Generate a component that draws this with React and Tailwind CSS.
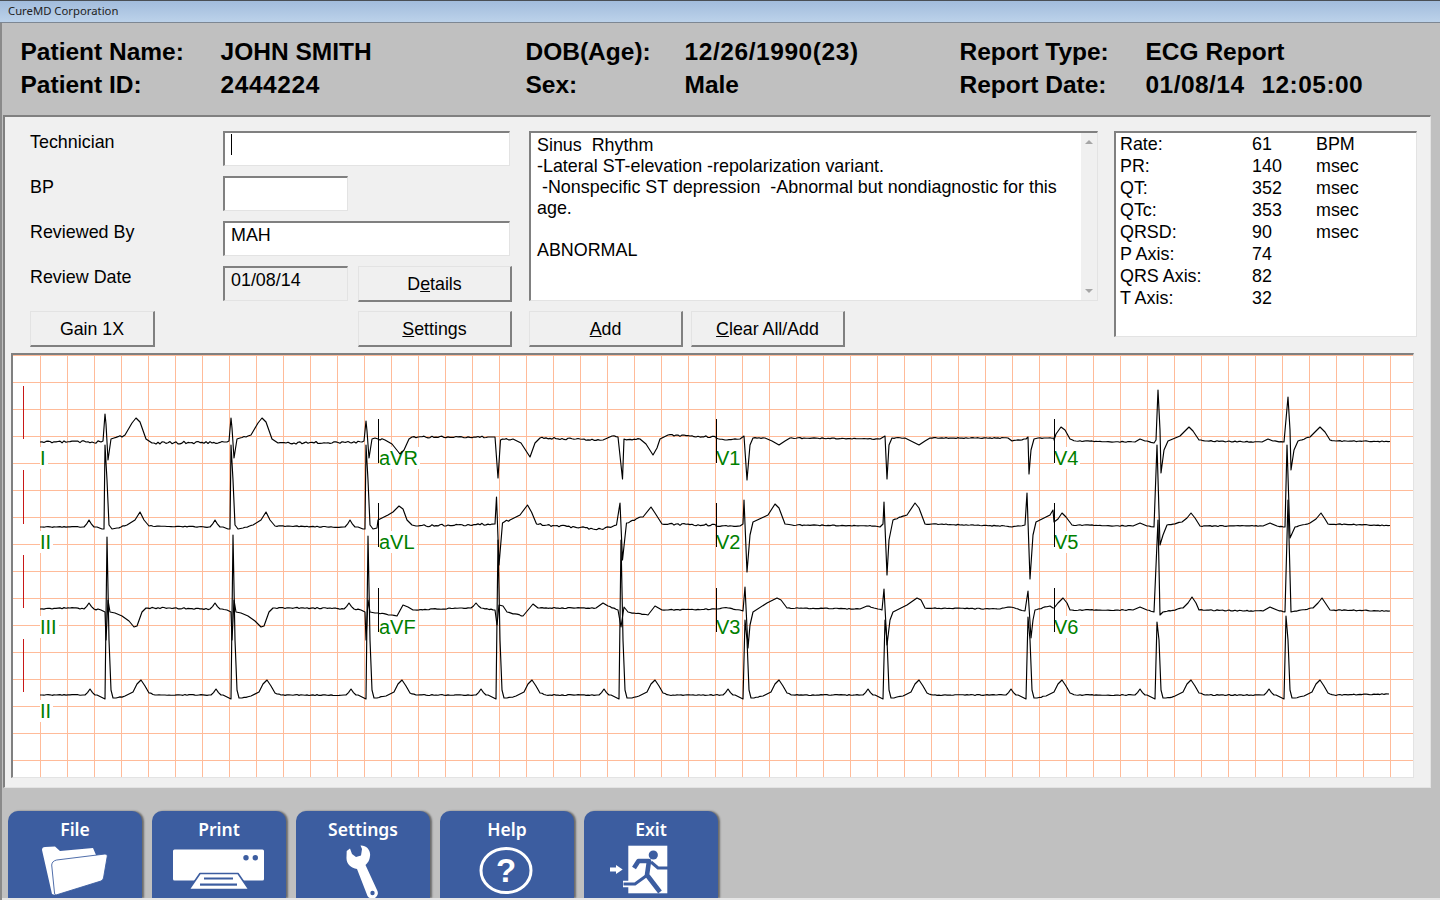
const BODY_FONT = "font-['Liberation_Sans',Arial,sans-serif]";

// deterministic jitter so the baselines look like a real recording
function jitter(x) {
  const n = Math.sin(x * 12.9898) * 43758.5453;
  return (n - Math.floor(n) - 0.5) * 2;
}

function noisy(points, amp) {
  const out = [];
  points.forEach(([x, y], i) => {
    out.push([x, y]);
    const next = points[i + 1];
    if (!next) return;
    const dx = next[0] - x;
    const dy = next[1] - y;
    if (dx < 6 || Math.abs(dy / dx) > 0.4) return;
    for (let px = x + 2; px < next[0] - 1; px += 2) {
      out.push([px, y + (dy * (px - x)) / dx + jitter(px) * amp]);
    }
  });
  return out;
}

const hump = (c, base, peak, w = 5) => [
  [c - w, base],
  [c - w * 0.5, base * 0.6 + peak * 0.4],
  [c, peak],
  [c + w * 0.5, base * 0.6 + peak * 0.4],
  [c + w, base],
];

const leadI = (r, top, sb) => [
  [r - 4, 442], [r - 2, 441], [r, top], [r + 1, top + 10], [r + 3, sb], [r + 6, 439], [r + 9, 438],
  [r + 20, 435], [r + 27, 423], [r + 31, 418], [r + 35, 422], [r + 41, 439], [r + 47, 443],
];

const leadII = (r) => [
  [r - 22, 527], ...hump(r - 16, 527, 520), [r - 8, 527], [r - 3, 529], [r - 1, 529], [r, 445], [r + 2, 480],
  [r + 4, 525], [r + 7, 529], [r + 12, 528], [r + 22, 525], [r + 30, 520], [r + 35, 512], [r + 39, 520], [r + 44, 526],
];

const leadIII = (r, tx) => [
  ...hump(r - 17, 609, 603), [r - 5, 610], [r - 1, 612], [r, 640], [r + 2, 600], [r + 4, 612], [r + 9, 613],
  [r + 16, 616], [r + 23, 621], [tx, 627], [tx + 3, 626], [tx + 8, 612], [tx + 12, 608],
];

const rhythm = (r, top) => [
  [r - 24, 695], ...hump(r - 17, 695, 689), [r - 10, 695], [r - 4, 698], [r - 2, 699], [r, top], [r + 2, 640],
  [r + 4, 690], [r + 6, 698], [r + 9, 698], [r + 18, 696], [r + 26, 692], [r + 30, 684], [r + 34, 680],
  [r + 38, 686], [r + 42, 693], [r + 48, 695],
];

const before = (pts, x) => pts.filter((p) => p[0] < x);

const row1 = [
  ...noisy([[40, 442], ...leadI(105, 414, 460), ...leadI(231, 418, 458), ...before(leadI(366, 421, 458), 378)], 1.3),
  ...noisy([
    [378, 439], [385, 440], [392, 444], [400, 454], [404, 450], [409, 439], [412, 437], [490, 437], [495, 437],
    [498, 478], [500.5, 440], [513, 439], [521, 443], [530, 457], [535, 443], [540, 438], [603, 440], [612, 436],
    [618, 437], [622.5, 479], [624, 439], [640, 439], [646, 444], [653, 455], [657, 448], [660, 439], [668, 435], [716, 437],
  ], 0.9),
  ...noisy([
    [716, 438], [725, 440], [740, 439], [744, 436], [747, 480], [750, 445], [753, 438], [765, 438], [772, 441],
    [779, 445], [785, 441], [790, 438], [880, 439], [885, 436], [887, 479], [889, 445], [892, 438], [905, 438],
    [913, 442], [919, 445], [925, 441], [930, 438], [1008, 438], [1012, 441], [1026, 439], [1028, 437], [1029, 474],
    [1031, 450], [1034, 439], [1038, 438], [1054, 438],
  ], 0.5),
  ...noisy([
    [1054, 440], [1056, 434], [1061, 427], [1065, 430], [1070, 439], [1076, 441], [1135, 442], [1140, 439], [1145, 441],
    [1154, 443], [1156, 440], [1158, 390], [1160, 430], [1161, 473], [1164, 450], [1168, 441], [1180, 436], [1185, 431],
    [1189, 427], [1193, 431], [1199, 440], [1205, 441], [1262, 442], [1268, 439], [1273, 441], [1284, 442], [1288, 397],
    [1290, 430], [1291, 470], [1294, 450], [1298, 441], [1310, 437], [1316, 431], [1320, 427], [1325, 432], [1330, 440],
    [1336, 441], [1390, 441.5],
  ], 0.5),
];

const row2 = [
  ...noisy([[40, 527], ...leadII(105), ...leadII(231), ...before(leadII(366), 378), [377, 528]], 0.5),
  ...noisy([
    [378, 520], [388, 515], [393, 512], [399, 506], [403, 509], [407, 520], [412, 525], [416, 526], [495, 524], [496.5, 497],
    [499, 565], [502.5, 523], [510, 520], [520, 515], [527.5, 505], [531.5, 512], [536.5, 524], [547, 525], [601, 529],
    [616.5, 525], [620, 503], [622.5, 560], [626.5, 523], [643, 517], [651, 507], [655, 513], [662, 524], [716, 525],
  ], 1.1),
  ...noisy([
    [716, 526], [740, 526], [743, 524], [744, 500], [747, 572], [750, 535], [753, 522], [768, 515], [775, 504], [779, 508],
    [785, 524], [792, 525], [875, 526], [880, 527], [883, 524], [884, 502], [887, 575], [889, 540], [893, 520], [907, 515],
    [915, 503], [919, 508], [925, 524], [932, 524], [1005, 526], [1012, 527], [1025, 525], [1027, 493], [1030, 579],
    [1033, 535], [1036, 522], [1050, 515], [1053, 510],
  ], 0.5),
  ...noisy([
    [1054, 522], [1058, 519], [1062, 513], [1066, 517], [1072, 525], [1078, 525], [1133, 526], [1140, 523], [1147, 526],
    [1154, 527], [1157, 445], [1160, 545], [1163, 535], [1167, 525], [1182, 522], [1187, 518], [1191, 513], [1195, 518],
    [1200, 526], [1263, 526], [1270, 523], [1277, 526], [1285, 527], [1287, 445], [1290, 538], [1295, 527], [1310, 523],
    [1316, 519], [1321, 513], [1325, 519], [1328, 524], [1390, 525.5],
  ], 0.5),
];

const row3 = [
  ...noisy([[40, 609], [70, 608], ...leadIII(106, 134), [170, 608], ...leadIII(232, 261), [330, 608], ...before(leadIII(366, 396), 378)], 0.7),
  ...noisy([
    [378, 613], [390, 615], [397, 616], [403, 605], [408, 607], [413, 610], [460, 608], ...hump(476, 608, 603),
    [495, 610], [497, 625], [499, 605], [503, 606], [507, 612], [523, 616], [528, 610], [533, 604], [538, 608], [596, 608],
    [603, 603], [608, 606], [618, 610], [621, 627], [624, 607], [628, 612], [648, 615], [655, 606], [662, 610], [716, 609],
  ], 0.5),
  ...noisy([
    [716, 609], [722, 608], [728, 608], [740, 610], [743, 611], [745, 587], [748, 648], [750, 625], [753, 612], [767, 603],
    [777, 598], [781, 600], [787, 608], [860, 609], [867, 606], [874, 608], [882, 610], [884, 589], [887, 645], [890, 620],
    [893, 612], [907, 605], [917, 598], [921, 600], [925, 608], [1000, 609], [1010, 607], [1025, 611], [1028, 591],
    [1031, 638], [1033, 620], [1035, 610], [1050, 606], [1053, 608],
  ], 0.5),
  ...noisy([
    [1054, 608], [1058, 603], [1063, 598], [1067, 603], [1070, 610], [1133, 610], [1140, 607], [1147, 610], [1154, 612],
    [1158, 520], [1160, 615], [1163, 612], [1183, 608], [1188, 603], [1192, 597], [1196, 603], [1199, 610], [1263, 611],
    [1270, 607], [1277, 610], [1285, 612], [1288, 500], [1291, 612], [1313, 608], [1318, 603], [1322, 598], [1326, 604],
    [1330, 610], [1390, 611],
  ], 0.5),
];

const row4 = noisy(
  [
    [40, 695],
    ...[[107, 537], [233, 535], [368, 536], [498, 540], [621, 540], [745, 620], [885, 620], [1028, 617], [1157, 622], [1286, 616]].flatMap(
      ([r, top]) => rhythm(r, top)
    ),
    [1389, 694],
  ],
  0.5
);

const traces = [row1, row2, row3, row4];
const markers = [378, 716, 1054];
const calibration = [[386, 439], [470, 524], [555, 608], [639, 692]];

const labels = [
  { text: "I", cls: "left-[27px] top-[92px]" },
  { text: "II", cls: "left-[27px] top-[176px]" },
  { text: "III", cls: "left-[27px] top-[261px]" },
  { text: "II", cls: "left-[27px] top-[345px]" },
  { text: "aVR", cls: "left-[366px] top-[92px]" },
  { text: "aVL", cls: "left-[366px] top-[176px]" },
  { text: "aVF", cls: "left-[366px] top-[261px]" },
  { text: "V1", cls: "left-[703px] top-[92px]" },
  { text: "V2", cls: "left-[703px] top-[176px]" },
  { text: "V3", cls: "left-[703px] top-[261px]" },
  { text: "V4", cls: "left-[1041px] top-[92px]" },
  { text: "V5", cls: "left-[1041px] top-[176px]" },
  { text: "V6", cls: "left-[1041px] top-[261px]" },
];

const measures = [
  ["Rate:", "61", "BPM"],
  ["PR:", "140", "msec"],
  ["QT:", "352", "msec"],
  ["QTc:", "353", "msec"],
  ["QRSD:", "90", "msec"],
  ["P Axis:", "74", ""],
  ["QRS Axis:", "82", ""],
  ["T Axis:", "32", ""],
];

function Field({ children, className = "" }) {
  return (
    <div className={`h-[35px] border-t-2 border-l-2 border-r border-b border-t-[#808080] border-l-[#808080] border-r-[#e3e3e3] border-b-[#e3e3e3] pl-[6px] leading-[24px] ${className}`}>
      {children}
    </div>
  );
}

function Btn({ children, className = "" }) {
  return (
    <button className={`h-[36px] bg-[#f0f0f0] border-t border-l border-r-2 border-b-2 border-t-[#e3e3e3] border-l-[#e3e3e3] border-r-[#808080] border-b-[#808080] text-[17.8px] text-black leading-[32px] ${className}`}>
      {children}
    </button>
  );
}

function FolderIcon() {
  return (
    <>
      <path d="M34 10 Q34 7 37 7 L47 6.5 L52 11 L85 8 L88 15 L55 40 L47 55 L44 54 Z" fill="#fff" />
      <path d="M43.7 25 Q44 21 48.7 20 L97 14 Q99.5 14 99.3 16 L95.5 38 Q95 40 93 41 L48 55 Q46.5 55 46.5 53 Z" fill="#fff" stroke="#3c5da0" strokeWidth="0.9" />
    </>
  );
}

function PrinterIcon() {
  return (
    <>
      <rect x="21" y="9.5" width="91" height="31" rx="1.5" fill="#fff" />
      <circle cx="94" cy="17.7" r="2.7" fill="#3c5da0" />
      <circle cx="103.3" cy="17.7" r="2.7" fill="#3c5da0" />
      <path d="M48 33.5 L86 33.5 L97 49.5 L37 49.5 Z" fill="#fff" stroke="#3c5da0" strokeWidth="1.6" strokeLinejoin="round" />
      <rect x="52" y="37.5" width="29" height="2" fill="#3c5da0" />
      <rect x="48" y="43.5" width="37" height="2.2" fill="#3c5da0" />
    </>
  );
}

function WrenchIcon() {
  return (
    <>
      <path d="M50.7 11 L54 8.5 L56 14 L60 17 L65 15.5 L66 9 L64.5 5.5 C70 5 75 10 74 16 C73.5 21 71.5 23 69.5 25 L81 50 A5.6 5.6 0 0 1 71.5 56 L61 29 C55 28 50 24 50.5 17 Z" fill="#fff" />
      <circle cx="76.5" cy="53" r="2.2" fill="#3c5da0" />
    </>
  );
}

function HelpIcon() {
  return (
    <>
      <ellipse cx="66" cy="30.5" rx="25" ry="22" fill="none" stroke="#fff" strokeWidth="3" />
      <text x="66" y="42" textAnchor="middle" fill="#fff" fontSize="33" fontWeight="700" fontFamily="Liberation Sans, Arial, sans-serif">?</text>
    </>
  );
}

function ExitIcon() {
  return (
    <>
      <rect x="44.3" y="5.7" width="39" height="47.6" fill="#fff" />
      <path d="M26 27.5 H32 V25 L38.7 29.5 L32 34 V31.5 H26 Z" fill="#fff" />
      <circle cx="69.3" cy="15" r="4.6" fill="#3c5da0" />
      <path d="M39 44 H51 L62 37" fill="none" stroke="#fff" strokeWidth="6.5" />
      <path d="M39.5 44 H51 L62 36" fill="none" stroke="#3c5da0" strokeWidth="3" />
      <path d="M50 28 L54.5 21 H65 L63 35 L76 52" fill="none" stroke="#3c5da0" strokeWidth="4.6" strokeLinejoin="round" />
      <path d="M67 22 L74 28 H84" fill="none" stroke="#3c5da0" strokeWidth="3" />
    </>
  );
}

const dock = [
  { name: "File", Icon: FolderIcon },
  { name: "Print", Icon: PrinterIcon },
  { name: "Settings", Icon: WrenchIcon },
  { name: "Help", Icon: HelpIcon },
  { name: "Exit", Icon: ExitIcon },
];

export default function App() {
  return (
    <div className={`w-[1440px] h-[900px] overflow-hidden bg-[#c0c0c0] flex flex-col text-black ${BODY_FONT}`}>
      {/* title bar */}
      <div className="h-[23px] shrink-0 border-t border-b border-t-[#4a4f55] border-b-[#7d8793] bg-linear-to-b from-[#a2bcdc] to-[#bcd2ea] pl-[8px] font-['Noto_Sans',sans-serif] text-[11.3px] leading-[20px] text-[#222]">
        CureMD Corporation
      </div>

      <div className="flex-1 flex flex-col border-l-2 border-[#8a8a8a]">
        {/* patient header */}
        <div className="h-[92px] shrink-0 pt-[12px] pl-[18.5px] grid grid-cols-[200px_305px_159px_275px_186px_1fr] grid-rows-[33px_33px] text-[24.5px] font-bold leading-[33px]">
          <div>Patient Name:</div>
          <div>JOHN SMITH</div>
          <div>DOB(Age):</div>
          <div className="tracking-[0.57px]">12/26/1990(23)</div>
          <div>Report Type:</div>
          <div>ECG Report</div>
          <div>Patient ID:</div>
          <div className="tracking-[0.57px]">2444224</div>
          <div>Sex:</div>
          <div>Male</div>
          <div>Report Date:</div>
          <div className="flex gap-[17px] tracking-[0.45px]">
            <span>01/08/14</span>
            <span>12:05:00</span>
          </div>
        </div>

        {/* main panel */}
        <div className="ml-px w-[1428px] h-[673px] shrink-0 bg-[#f0f0f0] border-t-2 border-l-2 border-r border-b border-t-[#808080] border-l-[#808080] border-r-[#e3e3e3] border-b-[#e3e3e3] pt-[14px] text-[17.9px]">
          <div className="flex pl-[25px] h-[216px]">
            <div className="w-[482px] grid grid-cols-[193px_125px_10px_154px] grid-rows-[35px_35px_35px_35px_36px] gap-y-[10px]">
              <div className="leading-[22px]">Technician</div>
              <Field className="col-span-3 w-[287px] bg-white relative">
                <span className="absolute left-[6px] top-[1px] w-px h-[21px] bg-black" />
              </Field>

              <div className="leading-[22px]">BP</div>
              <Field className="col-span-3 w-[125px] bg-white" />

              <div className="leading-[22px]">Reviewed By</div>
              <Field className="col-span-3 w-[287px] bg-white">MAH</Field>

              <div className="leading-[22px]">Review Date</div>
              <Field>01/08/14</Field>
              <div />
              <Btn>D<u>e</u>tails</Btn>

              <Btn className="w-[125px]">Gain 1X</Btn>
              <div />
              <div />
              <Btn><u>S</u>ettings</Btn>
            </div>

            <div className="ml-[17px] w-[569px]">
              <div className="h-[170px] bg-white flex border-t-2 border-l-2 border-r border-b border-t-[#808080] border-l-[#808080] border-r-[#e3e3e3] border-b-[#e3e3e3]">
                <div className="flex-1 pl-[6px] whitespace-pre leading-[21px] pt-[2px]">
                  {"Sinus  Rhythm\n-Lateral ST-elevation -repolarization variant.\n -Nonspecific ST depression  -Abnormal but nondiagnostic for this\nage.\n\nABNORMAL"}
                </div>
                <div className="w-[16px] bg-[#f0f0f0] flex flex-col justify-between items-center py-[7px]">
                  <span className="w-0 h-0 border-x-[4px] border-b-[4px] border-x-transparent border-b-[#a6a6a6]" />
                  <span className="w-0 h-0 border-x-[4px] border-t-[4px] border-x-transparent border-t-[#a6a6a6]" />
                </div>
              </div>
              <div className="mt-[10px] flex gap-[8px]">
                <Btn className="w-[154px]"><u>A</u>dd</Btn>
                <Btn className="w-[154px]"><u>C</u>lear All/Add</Btn>
              </div>
            </div>

            <div className="ml-[16px] w-[303px] h-[206px] bg-white border-t-2 border-l-2 border-r border-b border-t-[#808080] border-l-[#808080] border-r-[#e3e3e3] border-b-[#e3e3e3] pl-[4px] grid grid-cols-[132px_64px_1fr] auto-rows-[22px] leading-[22px]">
              {measures.map(([name, value, unit]) => (
                <div key={name} className="contents">
                  <div>{name}</div>
                  <div>{value}</div>
                  <div>{unit}</div>
                </div>
              ))}
            </div>
          </div>

          {/* ECG strip */}
          <div className="relative ml-[6px] mt-[6px] w-[1403px] h-[425px] bg-white border-t-2 border-l-2 border-r border-b border-t-[#808080] border-l-[#808080] border-r-[#e3e3e3] border-b-[#e3e3e3]">
            <svg className="block w-[1400px] h-[422px]" viewBox="13 355 1400 422">
              {Array.from({ length: 51 }, (_, i) => (
                <rect key={i} x={40 + i * 27} y="355" width="1" height="422" fill="#ffbb99" />
              ))}
              {Array.from({ length: 16 }, (_, i) => (
                <rect key={i} x="13" y={355 + i * 27} width="1400" height="1" fill="#ffbb99" />
              ))}
            </svg>
            {labels.map((l) => (
              <span key={l.cls} className={`absolute ${l.cls} h-[22px] bg-white pr-[2px] text-[20px] leading-[22px] text-[#008000]`}>
                {l.text}
              </span>
            ))}
            <svg className="absolute left-0 top-0 w-[1400px] h-[422px]" viewBox="13 355 1400 422">
              {calibration.map(([y1, y2]) => (
                <rect key={y1} x="23" y={y1} width="1" height={y2 - y1} fill="#c81818" />
              ))}
              {markers.map((x) =>
                [419, 503, 588].map((y) => <rect key={x + y} x={x} y={y} width="1" height="44" fill="#000" />)
              )}
              {traces.map((pts, i) => (
                <polyline
                  key={i}
                  points={pts.map(([x, y]) => `${x},${y}`).join(" ")}
                  fill="none"
                  stroke="#000"
                  strokeWidth="1.15"
                  strokeLinejoin="round"
                />
              ))}
            </svg>
          </div>
        </div>

        {/* dock */}
        <div className="flex-1 pt-[23px] pl-[6px] flex flex-col">
          <div className="flex gap-[10px] h-[87px]">
            {dock.map(({ name, Icon }) => (
              <div key={name} className="w-[134px] h-[87px] rounded-t-[10px] bg-[#3c5da0] shadow-[2px_0_2px_rgba(0,0,0,0.45)] pt-[8px] text-center text-white font-['Noto_Sans',sans-serif] font-semibold text-[17.5px] leading-[20px]">
                {name}
                <svg className="block w-[134px] h-[58px] mt-px" viewBox="0 0 134 58">
                  <Icon />
                </svg>
              </div>
            ))}
          </div>
          <div className="h-[2px] -ml-[6px] bg-[#e6e6e6]" />
        </div>
      </div>
    </div>
  );
}
